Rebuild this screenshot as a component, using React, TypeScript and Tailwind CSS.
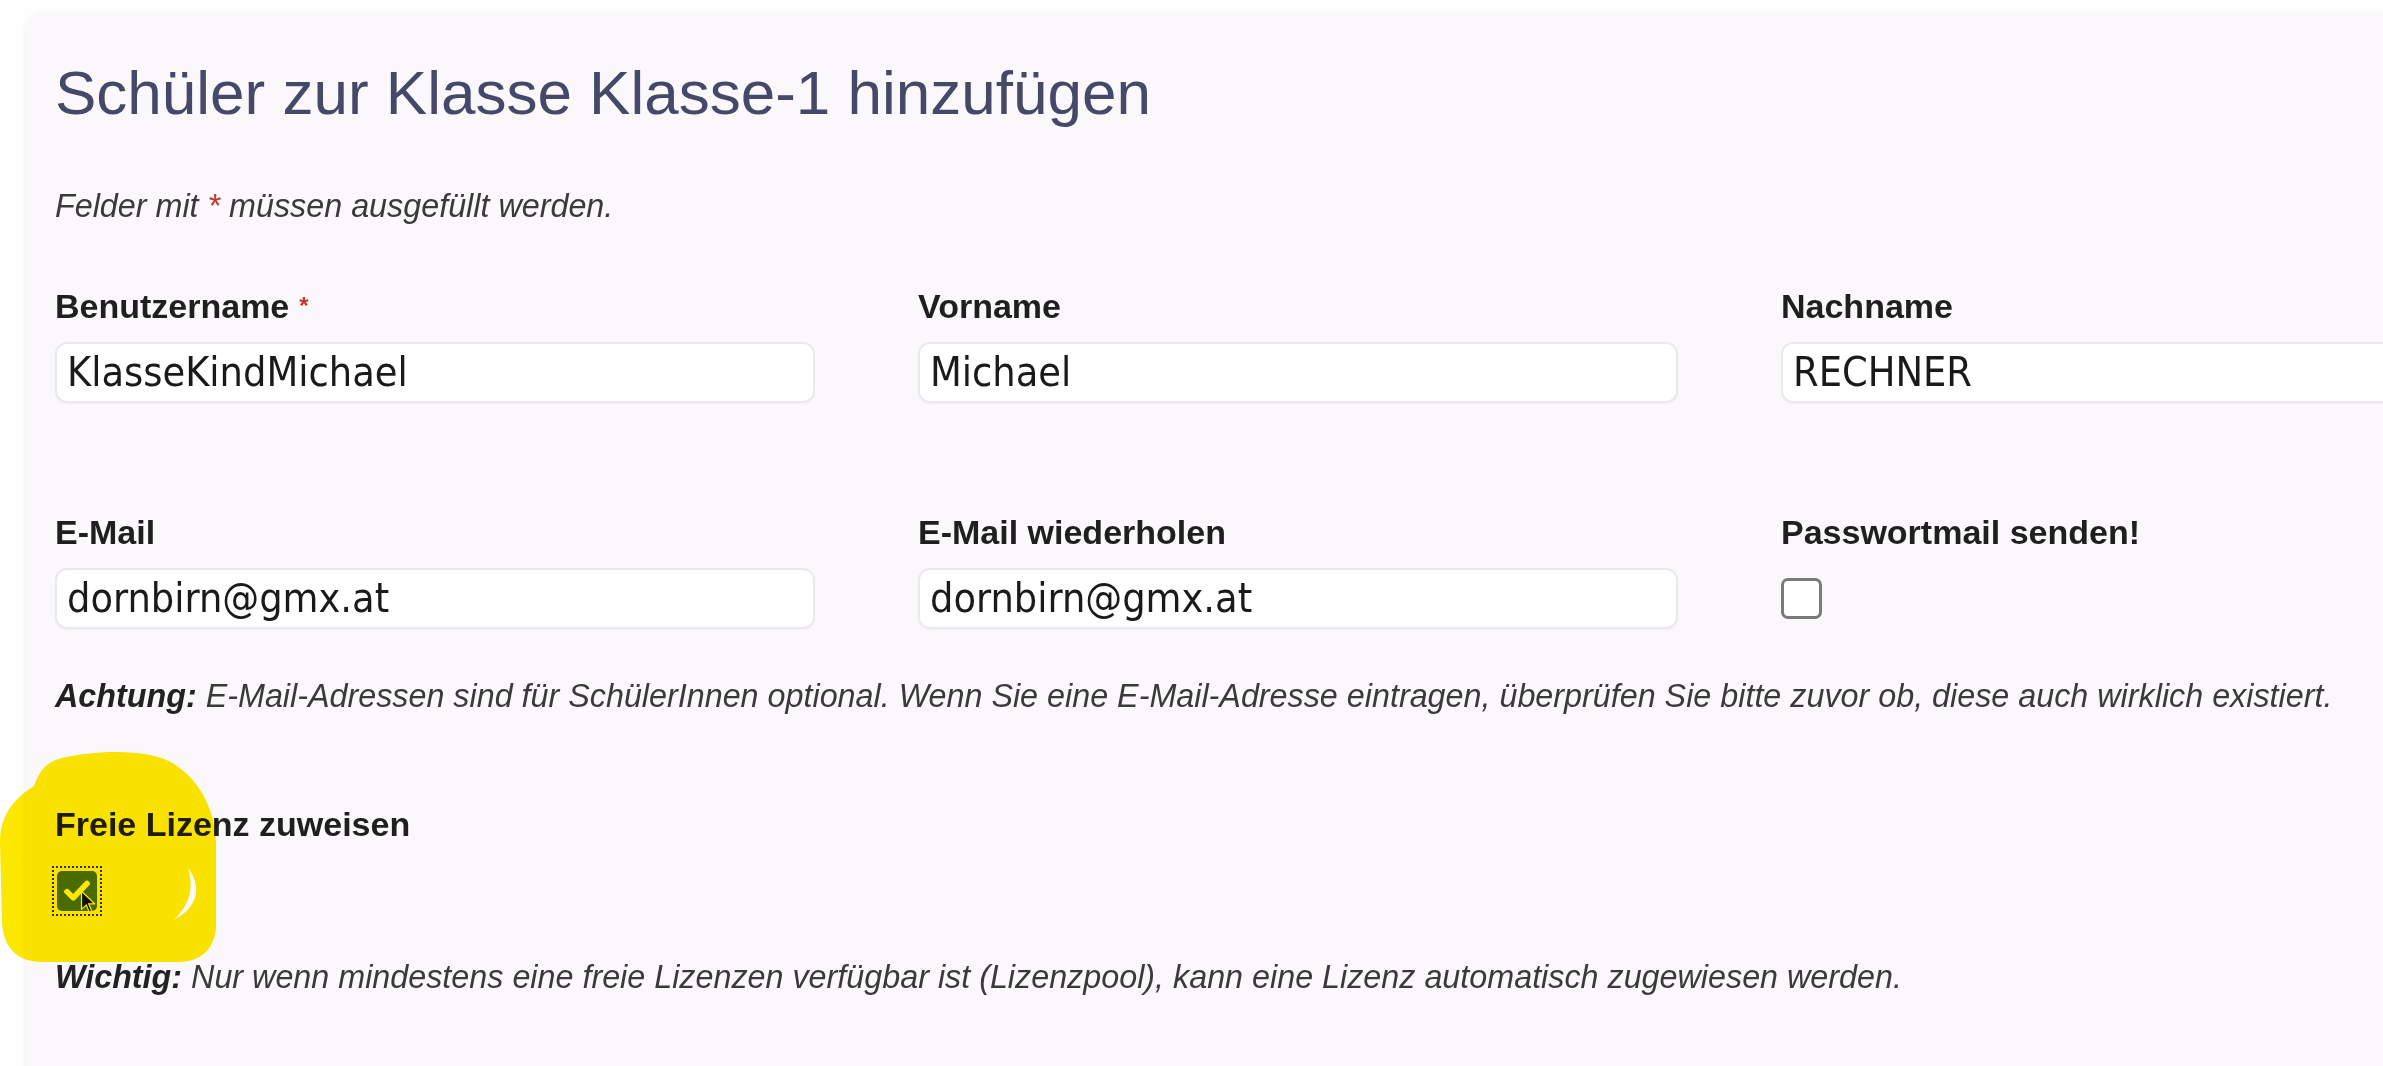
import React from "react";

const sans = "font-['Liberation_Sans',Arial,sans-serif]";
const inputFont = "font-['DejaVu_Sans_Condensed','DejaVu_Sans',sans-serif]";

function Label({ text, required }: { text: string; required?: boolean }) {
  return (
    <div className={`${sans} text-[34px] leading-[40px] font-bold text-[#1f1f1f]`}>
      {text}
      {required && <span className="ml-[10px] text-[24px] align-top text-[#c0392b]">*</span>}
    </div>
  );
}

function TextBox({ value }: { value: string }) {
  return (
    <div
      className={`${inputFont} mt-[16px] h-[61px] w-full flex items-center rounded-[12px] border-2 border-[#ebe9ee] bg-white pl-[10px] text-[41px] text-[#1a1a1a] shadow-[0_1px_2px_rgba(0,0,0,0.04)]`}
    >
      {value}
    </div>
  );
}

function Field({ label, value, required }: { label: string; value: string; required?: boolean }) {
  return (
    <div className="flex flex-col">
      <Label text={label} required={required} />
      <TextBox value={value} />
    </div>
  );
}

export default function App() {
  return (
    <div className="relative h-[1066px] w-full overflow-hidden bg-[#fefefe]">
      <div className="ml-[26px] mt-[15px] min-h-[1100px] w-[2600px] rounded-tl-[16px] bg-[#fbf8fb] pl-[29px] pt-[42px] shadow-[0_0_6px_rgba(60,40,80,0.08)]">
        <h1 className={`${sans} text-[62px] leading-[72px] font-normal text-[#46486a]`}>
          Schüler zur Klasse Klasse-1 hinzufügen
        </h1>

        <p className={`${sans} mt-[57px] text-[32.3px] leading-[40px] italic text-[#3a3a3a]`}>
          Felder mit <span className="text-[#c0392b]">*</span> müssen ausgefüllt werden.
        </p>

        <div className="mt-[60px] grid grid-cols-[760px_760px_760px] gap-x-[103px]">
          <Field label="Benutzername" value="KlasseKindMichael" required />
          <Field label="Vorname" value="Michael" />
          <Field label="Nachname" value="RECHNER" />
        </div>

        <div className="mt-[109px] grid grid-cols-[760px_760px_760px] gap-x-[103px]">
          <Field label="E-Mail" value="dornbirn@gmx.at" />
          <Field label="E-Mail wiederholen" value="dornbirn@gmx.at" />
          <div className="flex flex-col">
            <Label text="Passwortmail senden!" />
            <div className="mt-[16px] flex h-[61px] items-center">
              <div className="h-[41px] w-[41px] rounded-[7px] border-[3px] border-[#7a7a7a] bg-white" />
            </div>
          </div>
        </div>

        <p className={`${sans} mt-[47px] text-[32.3px] leading-[40px] italic text-[#3a3a3a]`}>
          <b className="text-[#222]">Achtung:</b> E-Mail-Adressen sind für SchülerInnen optional. Wenn Sie eine
          E-Mail-Adresse eintragen, überprüfen Sie bitte zuvor ob, diese auch wirklich existiert.
        </p>

        <div className="mt-[88px]">
          <Label text="Freie Lizenz zuweisen" />
        </div>

        <div className="relative mt-[22px] h-[50px] w-[50px] -ml-[3px] border-2 border-dotted border-[#333] p-[3px]">
          <div className="flex h-full w-full items-center justify-center rounded-[5px] bg-[#4b7590]">
            <svg viewBox="0 0 24 24" className="h-[30px] w-[30px]" fill="none" stroke="#fff" strokeWidth="4.5" strokeLinecap="round" strokeLinejoin="round">
              <path d="M4 12.5l5 5L20 6" />
            </svg>
          </div>
          <svg viewBox="0 0 12 20" className="absolute left-[26px] top-[22px] h-[24px] w-[15px]">
            <path d="M1 1v15l4-3.5 2.5 6 2-1-2.5-6H12z" fill="#111" stroke="#fff" strokeWidth="1" />
          </svg>
        </div>

        <p className={`${sans} mt-[41px] text-[32.3px] leading-[40px] italic text-[#3a3a3a]`}>
          <b className="text-[#222]">Wichtig:</b> Nur wenn mindestens eine freie Lizenzen verfügbar ist (Lizenzpool), kann
          eine Lizenz automatisch zugewiesen werden.
        </p>
      </div>

      {/* Marker highlight over the checkbox */}
      <svg
        className="pointer-events-none absolute left-0 top-[740px] h-[240px] w-[240px] mix-blend-multiply"
        viewBox="0 0 240 240"
      >
        <path
          d="M62 18 C95 10 150 8 174 24 C202 42 215 72 216 102 L216 188 C214 210 200 222 178 222 L42 222 C16 222 3 206 2 182 L0 102 C0 72 18 56 34 46 C40 30 46 22 62 18 Z"
          fill="#fde800"
        />
        <path d="M188 128 C201 145 200 166 174 180 C190 164 194 148 188 128 Z" fill="#fff" />
      </svg>
    </div>
  );
}
